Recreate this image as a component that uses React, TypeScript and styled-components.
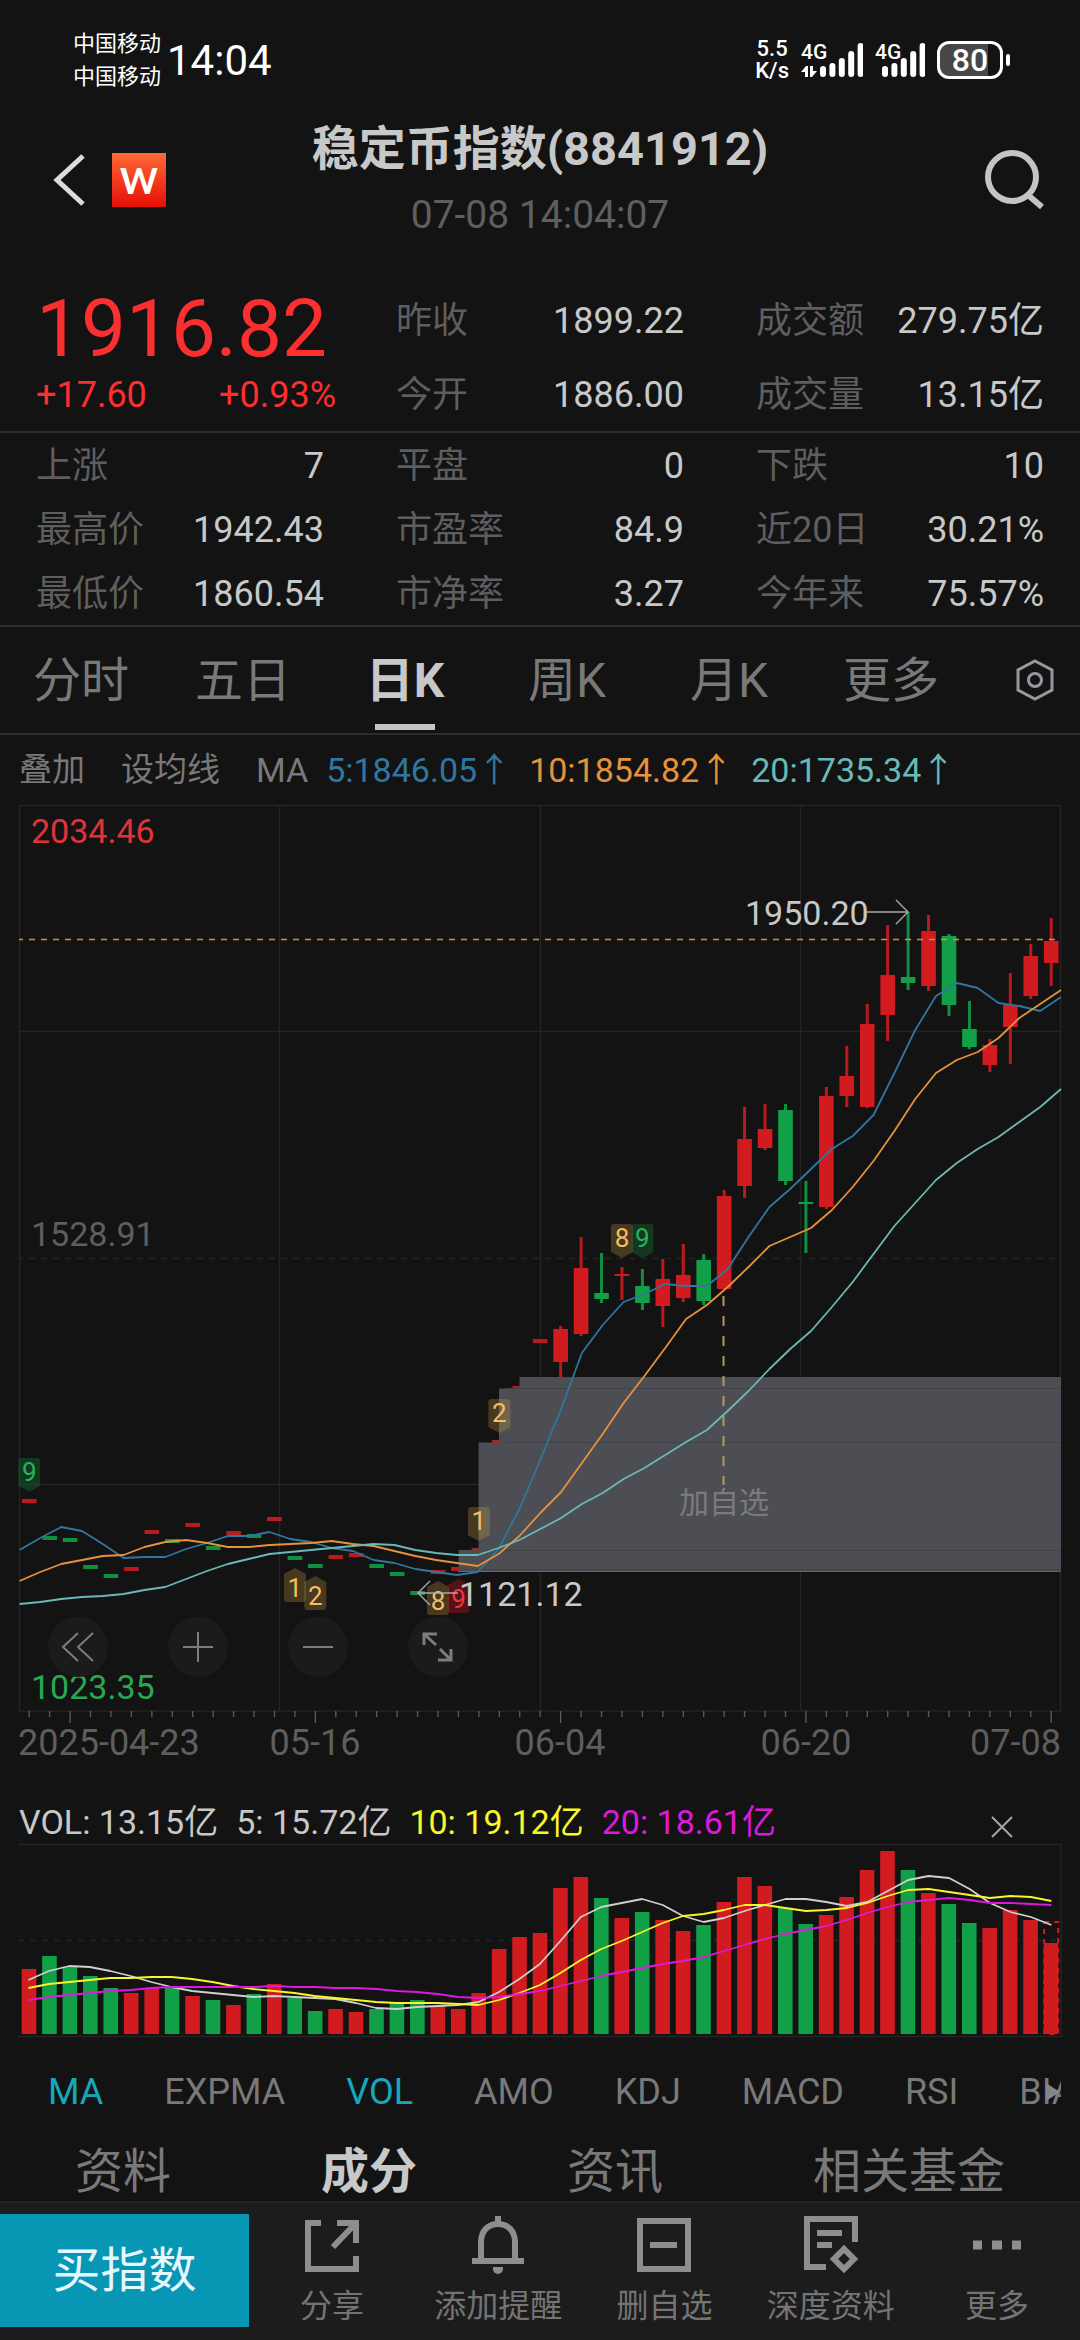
import React from 'react';
import styled, { createGlobalStyle } from 'styled-components';

const color = {
  page: '#131313',
  bar: '#1c1c1c',
  line: '#2c2c2c',
  grid: '#242424',
  text: '#c8c8c8',
  muted: '#797979',
  dim: '#5e5e5e',
  red: '#d11b1f',
  green: '#11a047',
  bright: '#fb2e30',
  blue: '#2f77a0',
  orange: '#e6923a',
  teal: '#69bab6',
  accent: '#17a7bd',
  icon: '#8e8e8e',
};

const GlobalStyle = createGlobalStyle`
  * { box-sizing: border-box; }
  body {
    margin: 0;
    background: ${color.page};
    color: ${color.text};
    font-family: Roboto, "Noto Sans CJK SC", sans-serif;
    font-size: 36px;
    line-height: 44px;
  }
  button {
    margin: 0;
    padding: 0;
    border: 0;
    background: none;
    color: inherit;
    font: inherit;
    cursor: pointer;
  }
  svg { display: block; }
  dl, dd, dt, h1, p { margin: 0; }
`;

const Page = styled.div`
  display: flex;
  flex-direction: column;
  min-height: 100vh;
`;

/* ---------- status bar ---------- */

const StatusBar = styled.div`
  display: flex;
  justify-content: space-between;
  align-items: center;
  padding: 27px 70px 0 73px;
  color: #fff;
`;

const StatusGroup = styled.div<{ $gap: number }>`
  display: flex;
  align-items: center;
  gap: ${(p) => p.$gap}px;
`;

const Carriers = styled.div`
  font-size: 22px;
  line-height: 33px;
`;

const Clock = styled.span`
  font-size: 42px;
  line-height: 48px;
  padding-top: 2px;
`;

const NetSpeed = styled.div`
  font-size: 22px;
  font-weight: 500;
  line-height: 22px;
  text-align: center;
`;

const Battery = styled.span`
  position: relative;
  display: flex;
  align-items: center;
  justify-content: center;
  width: 66px;
  height: 38px;
  margin-right: 7px;
  border: 3px solid #fff;
  border-radius: 12px;
  background: linear-gradient(90deg, #474747 80%, transparent 80%);
  font-size: 32px;
  font-weight: 500;
  line-height: 32px;

  &::after {
    content: '';
    position: absolute;
    right: -10px;
    top: 10px;
    width: 4px;
    height: 12px;
    border-radius: 2px;
    background: #fff;
  }
`;

/* ---------- header ---------- */

const Header = styled.header`
  display: grid;
  grid-template-columns: 1fr auto 1fr;
  align-items: center;
  padding: 25px 34px 41px;
`;

const HeaderLeft = styled.div`
  display: flex;
  align-items: center;
  gap: 24px;
  padding-left: 18px;
`;

const AppLogo = styled.span`
  display: flex;
  align-items: center;
  justify-content: center;
  width: 54px;
  height: 54px;
  background: linear-gradient(#ff6a36, #e60f08);
  color: #fff;
  font: 700 36px/54px Lato, sans-serif;
`;

const TitleBlock = styled.div`
  text-align: center;
`;

const Title = styled.h1`
  font-size: 47px;
  font-weight: 700;
  line-height: 62px;
  margin-bottom: 8px;
`;

const Timestamp = styled.p`
  color: ${color.dim};
  font-size: 39px;
  line-height: 54px;
`;

const SearchButton = styled.button`
  justify-self: end;
`;

/* ---------- quote figures ---------- */

const QuoteTop = styled.section`
  display: grid;
  grid-template-columns: repeat(3, 1fr);
  border-bottom: 2px solid ${color.line};
`;

const PriceBox = styled.div`
  padding: 0 24px 0 36px;
  color: ${color.bright};
`;

const Price = styled.div`
  font-size: 80px;
  line-height: 92px;
`;

const Change = styled.div`
  display: flex;
  justify-content: space-between;
  line-height: 40px;
`;

const Figures = styled.dl<{ $row: number }>`
  display: grid;
  grid-auto-rows: ${(p) => p.$row}px;
  padding: 0 36px;
`;

const Figure = styled.div`
  display: flex;
  justify-content: space-between;
  align-items: center;
  padding-top: 2px;
  white-space: nowrap;

  dt { color: ${color.dim}; }
`;

const QuoteGrid = styled.section`
  display: grid;
  grid-template-columns: repeat(3, 1fr);
  border-bottom: 2px solid ${color.line};
`;

/* ---------- tabs ---------- */

const PeriodBar = styled.nav`
  display: grid;
  grid-template-columns: repeat(6, 3fr) 2fr;
  height: 108px;
  border-bottom: 2px solid ${color.line};
`;

const PeriodTab = styled.button<{ $active?: boolean }>`
  display: flex;
  flex-direction: column;
  justify-content: flex-end;
  align-items: center;
  padding-bottom: 3px;
  gap: 12px;
  color: ${(p) => (p.$active ? color.text : color.muted)};
  font-size: 48px;
  font-weight: ${(p) => (p.$active ? 700 : 400)};
  line-height: 62px;

  &::after {
    content: '';
    width: 60px;
    height: 6px;
    background: ${(p) => (p.$active ? '#c4c4c8' : 'transparent')};
  }
`;

const SettingsButton = styled.button`
  display: flex;
  align-items: center;
  justify-content: center;
  padding-left: 18px;
`;

const MaRow = styled.div`
  display: flex;
  align-items: center;
  height: 70px;
  padding: 0 19px;
  color: ${color.muted};
  font-size: 34px;
  white-space: nowrap;
`;

const MaTool = styled.button`
  margin-right: 36px;
  font-size: 33px;
`;

const MaValue = styled.span<{ $color: string }>`
  margin-left: 18px;
  color: ${(p) => p.$color};
`;

/* ---------- charts ---------- */

const ChartPanel = styled.section`
  position: relative;
  padding: 0 19px;

  > svg {
    width: 100%;
    height: auto;
    overflow: visible;
  }
`;

const ChartTools = styled.div`
  position: absolute;
  left: 48px;
  bottom: 93px;
  display: flex;
  gap: 60px;
`;

const RoundButton = styled.button`
  display: flex;
  align-items: center;
  justify-content: center;
  width: 60px;
  height: 60px;
  border-radius: 50%;
  background: #1b1b1b;
`;

const VolumeRow = styled.div`
  display: flex;
  align-items: center;
  gap: 18px;
  height: 44px;
  margin-top: 30px;
  padding: 0 67px 0 19px;
  font-size: 34px;
  white-space: nowrap;
`;

const Tint = styled.span<{ $color: string }>`
  color: ${(p) => p.$color};
`;

const CloseButton = styled.button`
  margin-left: auto;
  padding-top: 10px;
`;

const Indicators = styled.nav`
  position: relative;
  display: flex;
  align-items: center;
  gap: 61px;
  height: 64px;
  margin: 20px 19px 19px;
  padding-left: 29px;
  overflow: hidden;
`;

const Indicator = styled.button<{ $active?: boolean }>`
  flex: none;
  color: ${(p) => (p.$active ? color.accent : color.muted)};
`;

const ScrollHint = styled.span`
  position: absolute;
  right: 1px;
  top: 23px;
  border: solid transparent;
  border-width: 9px 0 9px 14px;
  border-left-color: #85858c;
`;

const SectionTabs = styled.nav`
  display: flex;
  height: 58px;
`;

const SectionTab = styled.button<{ $active?: boolean }>`
  flex: 1 1 auto;
  color: ${(p) => (p.$active ? color.text : color.muted)};
  font-size: 48px;
  font-weight: ${(p) => (p.$active ? 700 : 400)};
  line-height: 58px;
`;

/* ---------- bottom bar ---------- */

const BottomBar = styled.footer`
  display: grid;
  grid-template-columns: 249px repeat(5, 1fr);
  padding: 11px 0 13px;
  border-top: 2px solid #242424;
  background: ${color.bar};
`;

const BuyButton = styled.button`
  height: 113px;
  background: #0896b5;
  color: #e4f8ff;
  font-size: 48px;
  line-height: 62px;
`;

const ActionButton = styled.button`
  display: flex;
  flex-direction: column;
  align-items: center;
  justify-content: center;
  gap: 12px;
  padding-bottom: 2px;
  color: #747474;
  font-size: 32px;
  line-height: 36px;
  white-space: nowrap;
`;

/* ---------- data ---------- */

type Pair = [string, string];

const topFigures: Pair[][] = [
  [['昨收', '1899.22'], ['今开', '1886.00']],
  [['成交额', '279.75亿'], ['成交量', '13.15亿']],
];

const gridFigures: Pair[][] = [
  [['上涨', '7'], ['最高价', '1942.43'], ['最低价', '1860.54']],
  [['平盘', '0'], ['市盈率', '84.9'], ['市净率', '3.27']],
  [['下跌', '10'], ['近20日', '30.21%'], ['今年来', '75.57%']],
];

// Direction of each session, r = up, g = down.
const sessions = 'rgggg' + 'rrgrg' + 'rgrgg' + 'rrggg' + 'rrrrr' + 'rrrgr' + 'grrgr' + 'rrggr' + 'rrrgr' + 'ggrrrr';

// Sessions traded at one price only: the y of their dash.
const flats = [
  1501, 1538, 1540, 1567, 1576, 1569, 1532, 1541, 1525, 1548, 1533, 1536, 1519,
  1558, 1566, 1557, 1555, 1566, 1574, 1593, 1572, 1569, 1550, 1442, 1388, 1341,
];

// [high, body top, body bottom, low] from session 26 on.
const candles = [
  [1326, 1329, 1362, 1377], [1237, 1268, 1334, 1336], [1253, 1293, 1299, 1303],
  [1267, 1274, 1276, 1300], [1269, 1286, 1303, 1310], [1259, 1279, 1306, 1327],
  [1244, 1275, 1298, 1302], [1254, 1260, 1301, 1305], [1190, 1196, 1289, 1289],
  [1107, 1139, 1186, 1198], [1104, 1129, 1148, 1150], [1104, 1110, 1181, 1185],
  [1181, 1202, 1204, 1253], [1087, 1096, 1207, 1209], [1046, 1076, 1096, 1107],
  [1004, 1024, 1107, 1108], [925, 975, 1015, 1041], [912, 977, 983, 990],
  [915, 931, 986, 991], [934, 936, 1005, 1016], [1001, 1029, 1047, 1049],
  [1039, 1045, 1065, 1072], [973, 1005, 1027, 1064], [944, 956, 996, 999],
  [918, 941, 963, 986],
];

const ma5 = [
  1550, 1538, 1527, 1531, 1544, 1558, 1557, 1557, 1549, 1543, 1536, 1536, 1532, 1539, 1542, 1548, 1551,
  1560, 1563, 1569, 1572, 1575, 1572, 1549, 1509, 1460, 1409, 1353, 1325, 1302, 1294, 1284, 1286, 1286,
  1269, 1237, 1207, 1189, 1169, 1149, 1136, 1115, 1073, 1030, 996, 983, 988, 1003, 1006, 1011, 997,
];
const ma10 = [
  1581, 1572, 1564, 1560, 1556, 1555, 1547, 1542, 1540, 1543, 1547, 1547, 1545, 1544, 1543, 1541, 1544,
  1546, 1551, 1556, 1560, 1563, 1566, 1554, 1536, 1513, 1492, 1463, 1434, 1403, 1376, 1348, 1319, 1305,
  1287, 1267, 1246, 1237, 1228, 1210, 1187, 1161, 1131, 1099, 1073, 1060, 1052, 1038, 1018, 1004, 990,
];
const ma20 = [
  1604, 1602, 1599, 1597, 1596, 1594, 1590, 1587, 1579, 1571, 1564, 1559, 1554, 1552, 1550, 1548, 1546,
  1544, 1545, 1550, 1553, 1555, 1555, 1548, 1540, 1529, 1518, 1504, 1493, 1479, 1468, 1455, 1442, 1430,
  1411, 1391, 1369, 1349, 1331, 1307, 1282, 1254, 1226, 1203, 1180, 1163, 1149, 1137, 1122, 1107, 1089,
];

const volumes = [
  1969, 1956, 1967, 1976, 1988, 1993, 1988, 1988, 1996, 2000, 2005, 1994, 1984, 1998, 2011, 2009, 2012,
  2009, 2003, 2000, 2006, 2009, 1993, 1949, 1937, 1933, 1888, 1877, 1898, 1918, 1912, 1920, 1931, 1925,
  1902, 1877, 1886, 1908, 1924, 1915, 1897, 1870, 1851, 1870, 1893, 1904, 1923, 1928, 1910, 1920, 1943,
];
const vol5 = [
  1980, 1971, 1966, 1967, 1971, 1976, 1982, 1987, 1991, 1993, 1995, 1997, 1996, 1997, 1998, 1999, 2003,
  2008, 2009, 2007, 2006, 2005, 2002, 1992, 1979, 1964, 1941, 1917, 1907, 1903, 1899, 1905, 1916, 1922,
  1918, 1911, 1905, 1899, 1899, 1902, 1906, 1902, 1891, 1880, 1876, 1878, 1889, 1903, 1912, 1917, 1925,
];
const vol10 = [
  1988, 1984, 1982, 1980, 1978, 1978, 1977, 1977, 1979, 1982, 1986, 1989, 1991, 1993, 1996, 1998, 2000,
  2002, 2003, 2003, 2003, 2004, 2005, 2000, 1993, 1985, 1973, 1960, 1949, 1941, 1932, 1923, 1916, 1914,
  1910, 1905, 1905, 1908, 1911, 1910, 1908, 1903, 1896, 1890, 1889, 1892, 1895, 1898, 1896, 1897, 1901,
];
const vol20 = [
  2000, 1997, 1995, 1993, 1991, 1990, 1988, 1987, 1987, 1987, 1987, 1987, 1986, 1987, 1987, 1988, 1988,
  1989, 1991, 1992, 1994, 1997, 1998, 1997, 1994, 1991, 1986, 1981, 1976, 1972, 1968, 1964, 1961, 1957,
  1951, 1945, 1939, 1934, 1930, 1926, 1920, 1913, 1907, 1902, 1900, 1898, 1900, 1903, 1903, 1904, 1905,
];

type Tone = 'green' | 'gold' | 'red';

const tones: Record<Tone, { fill: string; text: string }> = {
  green: { fill: 'rgba(20,120,55,.36)', text: '#27b35a' },
  gold: { fill: 'rgba(215,165,70,.26)', text: '#f5bd62' },
  red: { fill: 'rgba(190,20,30,.38)', text: '#e8383c' },
};

const signals: { at: number; y: number; digit: string; tone: Tone; up?: boolean }[] = [
  { at: 0, y: 1458, digit: '9', tone: 'green' },
  { at: 13, y: 1568, digit: '1', tone: 'gold', up: true },
  { at: 14, y: 1576, digit: '2', tone: 'gold', up: true },
  { at: 20, y: 1581, digit: '8', tone: 'gold', up: true },
  { at: 21, y: 1579, digit: '9', tone: 'red', up: true },
  { at: 22, y: 1507, digit: '1', tone: 'gold' },
  { at: 23, y: 1399, digit: '2', tone: 'gold' },
  { at: 29, y: 1224, digit: '8', tone: 'gold' },
  { at: 30, y: 1224, digit: '9', tone: 'green' },
];

const sessionX = (i: number) => 29.2 + 20.44 * i;
const tint = (i: number) => (sessions[i] === 'r' ? color.red : color.green);
const trace = (ys: number[], start: number, step: number) =>
  ys.map((y, i) => `${(start + step * i).toFixed(1)},${y}`).join(' ');

/* ---------- parts ---------- */

function Signal({ busy }: { busy?: boolean }) {
  const x0 = busy ? 22 : 10;
  return (
    <svg width={x0 + 40} height="38" fill="#fff" aria-hidden="true">
      <text x="0" y="18" fontSize="21" fontWeight="500">4G</text>
      {[25, 22, 17, 10, 2].map((top, i) => (
        <rect key={top} x={x0 - 3 + i * 9.4} y={top} width="6" height={36 - top} rx="3" />
      ))}
      {busy && <path d="M7 36H4V31H0L5 25H7ZM9 25H12V30H16L11 36H9Z" />}
    </svg>
  );
}

function Badge({ at, y, digit, tone, up }: (typeof signals)[number]) {
  const shape = up
    ? 'M0 0 11 6V31a3 3 0 0 1-3 3H-8a3 3 0 0 1-3-3V6Z'
    : 'M-8 0H8a3 3 0 0 1 3 3V28L0 34-11 28V3a3 3 0 0 1 3-3Z';
  return (
    <g transform={`translate(${sessionX(at)} ${y})`}>
      <path d={shape} fill={tones[tone].fill} />
      <text y={up ? 29 : 23} textAnchor="middle" fontSize="26" fill={tones[tone].text}>
        {digit}
      </text>
    </g>
  );
}

function PriceChart() {
  const columns = [19.5, 279.5, 540.5, 800.5, 1060.5];
  return (
    <svg viewBox="19 805 1042 965" role="img" aria-label="日K">
      <g stroke={color.grid} strokeWidth="1.4">
        {columns.map((x) => <path key={x} d={`M${x} 805V1711`} />)}
        {[805.5, 1031.5, 1484.5, 1711].map((y) => <path key={y} d={`M19 ${y}H1061`} />)}
        <path d="M19 1258.5H1061" strokeDasharray="6 6" strokeDashoffset="2" />
      </g>

      <g stroke="#5a5a5a" strokeWidth="1.4">
        {Array.from({ length: 51 }, (_, i) => (
          <path key={i} d={`M${sessionX(i)} 1711v${i % 12 === 2 ? 12 : 6}`} />
        ))}
      </g>

      <g fontSize="34">
        <text x="31" y="843" fill="#e03338">2034.46</text>
        <text x="31" y="1246" fill={color.dim}>1528.91</text>
        <text x="31" y="1699" fill="#27a853">1023.35</text>
      </g>
      <g fontSize="36" fill={color.dim}>
        <text x="18" y="1755">2025-04-23</text>
        <text x="315" y="1755" textAnchor="middle">05-16</text>
        <text x="560" y="1755" textAnchor="middle">06-04</text>
        <text x="806" y="1755" textAnchor="middle">06-20</text>
        <text x="1061" y="1755" textAnchor="end">07-08</text>
      </g>

      {flats.map((y, i) => (
        <rect key={i} x={sessionX(i) - 7.3} y={y - 2} width="14.6" height="4" fill={tint(i)} opacity=".88" />
      ))}

      <path d="M458.5 1571.5V1550H478.6V1442.5H499V1388.5H519.5V1377H1061V1571.5Z" fill="#4d4e53" />
      <path d="M506 1388.5H1061M526 1388.5H1061M506 1442.5H1061M486 1550.5H1061M465 1569.5H1061" stroke="#414246" strokeWidth="1.2" />
      <path d="M458 1571.5H1061" stroke="#626267" strokeWidth="1" />

      {candles.map(([high, top, bottom, low], n) => {
        const i = n + 26;
        const x = sessionX(i);
        return (
          <g key={i} fill={tint(i)}>
            <rect x={x - 1.5} y={high} width="3" height={low - high} opacity=".88" />
            <rect x={x - 7.3} y={top} width="14.6" height={bottom - top} />
          </g>
        );
      })}

      <path d="M19 939.5H1056" stroke="#dc8a3c" strokeWidth="1.6" strokeDasharray="6 6" strokeDashoffset="2" />
      <path d="M723.5 1296V1485" stroke="#b29a5a" strokeWidth="2" strokeDasharray="10 10" />
      <text x="724" y="1513" textAnchor="middle" fontSize="30" fill="#7b7b7b">加自选</text>

      <g fill="none" strokeWidth="1.8" strokeLinejoin="round">
        <polyline points={trace(ma5, 19.5, 20.83)} stroke={color.blue} />
        <polyline points={trace(ma10, 19.5, 20.83)} stroke={color.orange} />
        <polyline points={trace(ma20, 19.5, 20.83)} stroke={color.teal} />
      </g>

      {signals.map((s) => <Badge key={`${s.at}-${s.digit}`} {...s} />)}

      <g fill="none" stroke="#a8a8a8" strokeWidth="1.4">
        <path d="M867 912H908M896 900 908 912 896 924" />
        <path d="M458 1593H418M430 1581 418 1593 430 1605" />
      </g>
      <g fontSize="34" fill={color.text}>
        <text x="745" y="925">1950.20</text>
        <text x="459" y="1606">1121.12</text>
      </g>
    </svg>
  );
}

function VolumeChart() {
  const last = sessionX(50);
  return (
    <svg viewBox="19 1844 1042 196" role="img" aria-label="VOL">
      <g stroke={color.grid} strokeWidth="1.4" fill="none">
        <path d="M18 1844.5H1061V2036.5H18" />
        <path d="M18 1940.5H1061" strokeDasharray="6 6" />
      </g>
      {volumes.map((top, i) => (
        <rect key={i} x={sessionX(i) - 7.5} y={top} width="14.6" height={2034 - top} fill={tint(i)} />
      ))}
      <rect x={last - 7} y="1922" width="14" height="112" fill="none" stroke={color.red} strokeWidth="2" strokeDasharray="5 5" />
      <g fill="none" strokeWidth="1.8" strokeLinejoin="round">
        <polyline points={trace(vol5, 28.4, 20.46)} stroke="#cfcfcf" />
        <polyline points={trace(vol10, 28.4, 20.46)} stroke="#f7f72a" />
        <polyline points={trace(vol20, 28.4, 20.46)} stroke="#dd19dd" />
      </g>
    </svg>
  );
}

function Icon({ size = 60, weight = 6, tone = color.icon, children }: {
  size?: number; weight?: number; tone?: string; children: React.ReactNode;
}) {
  return (
    <svg width={size} height={size} viewBox={`0 0 ${size} ${size}`} fill="none" stroke={tone} strokeWidth={weight} aria-hidden="true">
      {children}
    </svg>
  );
}

const actions: { label: string; drawing: React.ReactNode }[] = [
  { label: '分享', drawing: <path d="M19 7H6V53H54V40M35 7H54V27M53 8 31 31" /> },
  {
    label: '添加提醒',
    drawing: (
      <>
        <path d="M13 44V26C13 15 20 8 30 8S47 15 47 26V44M4 45H56M30 0V8" />
        <path d="M25 51H35V53A5 5 0 0 1 25 53Z" fill={color.icon} stroke="none" />
      </>
    ),
  },
  { label: '删自选', drawing: <path d="M6 5H54V53H6ZM16 29H43" /> },
  {
    label: '深度资料',
    drawing: (
      <>
        <path d="M25 51H6V3H54V26M16 17H41M16 29H31" />
        <path d="M43 33 53 43 43 53 33 43Z" />
      </>
    ),
  },
  {
    label: '更多',
    drawing: <path d="M6 29h9M25 29h10M45 29h9" strokeWidth="9" />,
  },
];

const chartTools: { label: string; d: string; weight: number }[] = [
  { label: '后退', d: 'M30 16 15 30 30 44M45 16 30 30 45 44', weight: 2 },
  { label: '放大', d: 'M15 30H45M30 15V45', weight: 2 },
  { label: '缩小', d: 'M15 30H45', weight: 2 },
  { label: '全屏', d: 'M16 28V17H29M16 17 28 28M43 32V43H30M43 43 32 32', weight: 3 },
];

function FigureColumn({ items, row }: { items: Pair[]; row: number }) {
  return (
    <Figures $row={row}>
      {items.map(([label, value]) => (
        <Figure key={label}>
          <dt>{label}</dt>
          <dd>{value}</dd>
        </Figure>
      ))}
    </Figures>
  );
}

export default function App() {
  return (
    <Page>
      <GlobalStyle />
      <StatusBar>
        <StatusGroup $gap={6}>
          <Carriers>
            <div>中国移动</div>
            <div>中国移动</div>
          </Carriers>
          <Clock>14:04</Clock>
        </StatusGroup>
        <StatusGroup $gap={12}>
          <NetSpeed>
            <div>5.5</div>
            <div>K/s</div>
          </NetSpeed>
          <Signal busy />
          <Signal />
          <Battery>80</Battery>
        </StatusGroup>
      </StatusBar>

      <Header>
        <HeaderLeft>
          <button aria-label="返回">
            <svg width="36" height="56" fill="none" stroke="#dcdcdc" strokeWidth="5">
              <path d="M31 4 5 28 31 52" />
            </svg>
          </button>
          <AppLogo>W</AppLogo>
        </HeaderLeft>
        <TitleBlock>
          <Title>稳定币指数(8841912)</Title>
          <Timestamp>07-08 14:04:07</Timestamp>
        </TitleBlock>
        <SearchButton aria-label="搜索">
          <svg width="62" height="62" fill="none" stroke="#c4c4c4" strokeWidth="6">
            <circle cx="28" cy="28" r="24" />
            <path d="M44 46 58 58" />
          </svg>
        </SearchButton>
      </Header>

      <QuoteTop>
        <PriceBox>
          <Price>1916.82</Price>
          <Change>
            <span>+17.60</span>
            <span>+0.93%</span>
          </Change>
        </PriceBox>
        {topFigures.map((items) => <FigureColumn key={items[0][0]} items={items} row={74} />)}
      </QuoteTop>
      <QuoteGrid>
        {gridFigures.map((items) => <FigureColumn key={items[0][0]} items={items} row={64} />)}
      </QuoteGrid>

      <PeriodBar>
        {['分时', '五日', '日K', '周K', '月K', '更多'].map((name) => (
          <PeriodTab key={name} $active={name === '日K'}>{name}</PeriodTab>
        ))}
        <SettingsButton aria-label="设置">
          <Icon size={42} weight={3} tone="#9797a0">
            <path d="M21 2 38 11V31L21 40 4 31V11Z" />
            <circle cx="21" cy="21" r="6.5" />
          </Icon>
        </SettingsButton>
      </PeriodBar>

      <MaRow>
        <MaTool>叠加</MaTool>
        <MaTool>设均线</MaTool>
        <span>MA</span>
        <MaValue $color={color.blue}>5:1846.05↑</MaValue>
        <MaValue $color={color.orange}>10:1854.82↑</MaValue>
        <MaValue $color={color.teal}>20:1735.34↑</MaValue>
      </MaRow>

      <ChartPanel>
        <PriceChart />
        <ChartTools>
          {chartTools.map((tool) => (
            <RoundButton key={tool.label} aria-label={tool.label}>
              <Icon weight={tool.weight} tone="#7d7d7d"><path d={tool.d} /></Icon>
            </RoundButton>
          ))}
        </ChartTools>
      </ChartPanel>

      <VolumeRow>
        <span>VOL: 13.15亿</span>
        <span>5: 15.72亿</span>
        <Tint $color="#f7f72a">10: 19.12亿</Tint>
        <Tint $color="#dd19dd">20: 18.61亿</Tint>
        <CloseButton aria-label="关闭">
          <Icon size={22} weight={2} tone="#a6a6a6"><path d="M1 1 21 21M21 1 1 21" /></Icon>
        </CloseButton>
      </VolumeRow>
      <ChartPanel>
        <VolumeChart />
      </ChartPanel>

      <Indicators>
        {['MA', 'EXPMA', 'VOL', 'AMO', 'KDJ', 'MACD', 'RSI', 'BIAS'].map((name) => (
          <Indicator key={name} $active={name === 'MA' || name === 'VOL'}>{name}</Indicator>
        ))}
        <ScrollHint />
      </Indicators>

      <SectionTabs>
        {['资料', '成分', '资讯', '相关基金'].map((name) => (
          <SectionTab key={name} $active={name === '成分'}>{name}</SectionTab>
        ))}
      </SectionTabs>

      <BottomBar>
        <BuyButton>买指数</BuyButton>
        {actions.map(({ label, drawing }) => (
          <ActionButton key={label}>
            <Icon>{drawing}</Icon>
            {label}
          </ActionButton>
        ))}
      </BottomBar>
    </Page>
  );
}
